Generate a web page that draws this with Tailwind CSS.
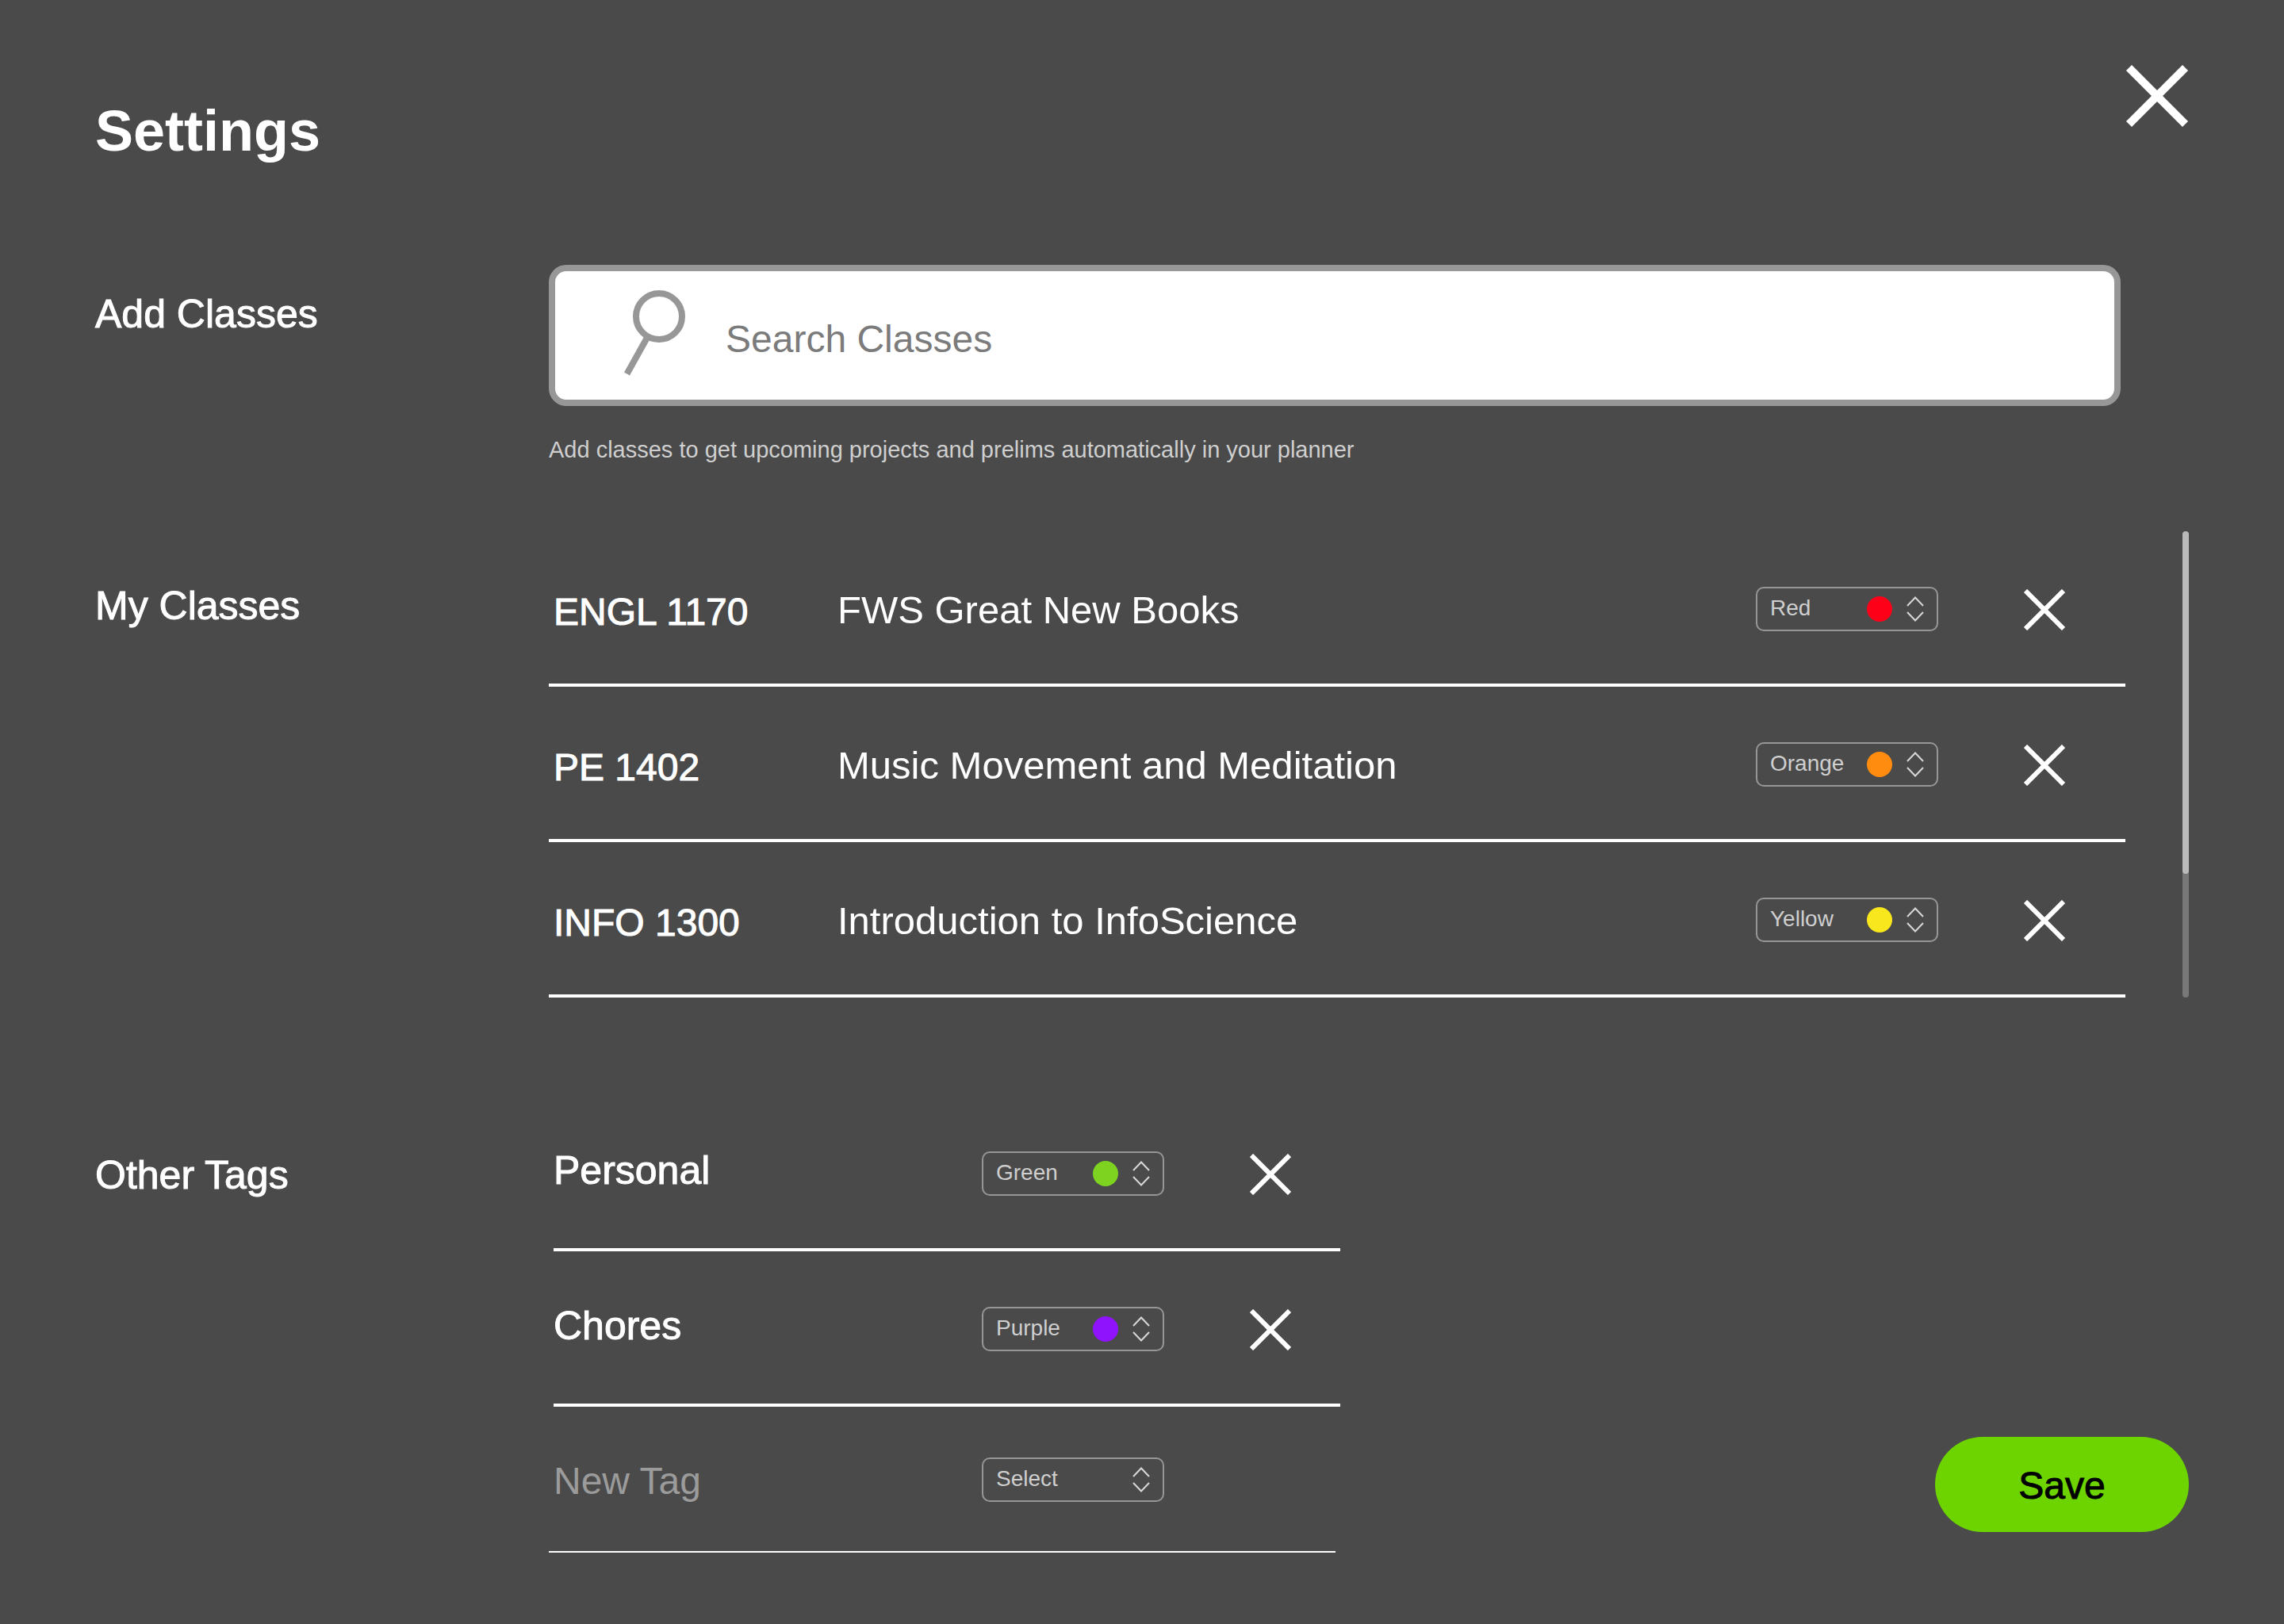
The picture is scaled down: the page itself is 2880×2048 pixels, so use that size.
<!DOCTYPE html>
<html lang="en">
<head>
<meta charset="utf-8">
<meta name="viewport" content="width=device-width, initial-scale=1">
<title>Settings</title>
<script src="https://cdn.jsdelivr.net/npm/@tailwindcss/browser@4"></script>
</head>
<body class="min-h-screen bg-[#4a4a4a] font-['Liberation_Sans',Arial,sans-serif] text-white">
<!-- Shared icon shapes -->
<svg class="hidden" aria-hidden="true">
  <symbol id="remove" viewBox="0 0 52 52"><path d="M2 2L50 50M50 2L2 50" fill="none" stroke="currentColor" stroke-width="6"/></symbol>
  <symbol id="updown" viewBox="0 0 22 32"><path d="M1 12L11 1.500L21 12M1 20L11 30.500L21 20" fill="none" stroke="currentColor" stroke-width="2"/></symbol>
</svg>

<main class="px-[120px] pt-[82px] pb-[90px]">
  <header class="flex items-start justify-between">
    <h1 class="pt-[43px] text-[72px] leading-[80px] font-bold">Settings</h1>
    <button type="button" aria-label="Close settings">
      <svg class="block size-[80px]" viewBox="0 0 80 80"><path d="M4.500 3.500L75.500 74.500M75.500 3.500L4.500 74.500" fill="none" stroke="currentColor" stroke-width="10"/></svg>
    </button>
  </header>

  <section class="mt-[129px] grid grid-cols-[572px_1fr]">
    <h2 class="pt-8 text-[50px] leading-[60px] [-webkit-text-stroke:1px]"><label for="search">Add Classes</label></h2>
    <div class="pr-[86px]">
      <div class="relative">
        <input id="search" type="search" placeholder="Search Classes" class="block h-[178px] w-full appearance-none rounded-[22px] border-8 border-[#979797] bg-white pt-2 pl-[215px] text-[48px] text-[#4a4a4a] placeholder:text-[#7b7b7b] placeholder:opacity-100">
        <svg class="pointer-events-none absolute top-8 left-[94px] h-[110px] w-[80px] text-[#979797]" viewBox="0 0 80 110" aria-hidden="true"><circle cx="45" cy="33" r="29" fill="none" stroke="currentColor" stroke-width="8"/><path d="M31 58L4.500 105.500" stroke="currentColor" stroke-width="8"/></svg>
      </div>
      <p class="mt-[38px] text-[29px] leading-[34px] text-[#cfcfcf]">Add classes to get upcoming projects and prelims automatically in your planner</p>
    </div>
  </section>

  <section class="mt-[86px] grid grid-cols-[572px_1fr]">
    <h2 id="my-classes" class="pt-16 text-[50px] leading-[60px] font-normal [-webkit-text-stroke:1px]">My Classes</h2>
    <div class="flex gap-[72px]">
      <table class="w-full border-separate border-spacing-0 text-left" aria-labelledby="my-classes">
        <tbody>
          <tr>
            <th scope="row" class="h-[196px] w-[364px] border-b-4 border-white pt-3 pl-1.5 text-[48px] leading-[60px] font-normal [-webkit-text-stroke:1px]">ENGL 1170</th>
            <td class="border-b-4 border-white pt-1.5 text-[49px] leading-[60px]">FWS Great New Books</td>
            <td class="w-[338px] border-b-4 border-white pt-1">
              <div class="relative h-14 w-[230px]">
                <select aria-label="Color for ENGL 1170" class="size-full appearance-none rounded-[10px] border-2 border-[#979797] pb-0.5 pl-4 text-[28px] leading-8 text-[#cfcfcf]"><option>Red</option></select>
                <span class="pointer-events-none absolute top-3 right-[58px] size-8 rounded-full bg-[#ff0019]"></span>
                <svg class="pointer-events-none absolute top-3 right-[18px] h-8 w-[22px] text-[#d8d8d8]"><use href="#updown"/></svg>
              </div>
            </td>
            <td class="w-[128px] border-b-4 border-white pt-1.5"><button type="button" class="block" aria-label="Remove ENGL 1170"><svg class="block size-[52px]"><use href="#remove"/></svg></button></td>
          </tr>
          <tr>
            <th scope="row" class="h-[196px] border-b-4 border-white pt-3 pl-1.5 text-[48px] leading-[60px] font-normal [-webkit-text-stroke:1px]">PE 1402</th>
            <td class="border-b-4 border-white pt-1.5 text-[49px] leading-[60px]">Music Movement and Meditation</td>
            <td class="border-b-4 border-white pt-1">
              <div class="relative h-14 w-[230px]">
                <select aria-label="Color for PE 1402" class="size-full appearance-none rounded-[10px] border-2 border-[#979797] pb-0.5 pl-4 text-[28px] leading-8 text-[#cfcfcf]"><option>Orange</option></select>
                <span class="pointer-events-none absolute top-3 right-[58px] size-8 rounded-full bg-[#ff8c0f]"></span>
                <svg class="pointer-events-none absolute top-3 right-[18px] h-8 w-[22px] text-[#d8d8d8]"><use href="#updown"/></svg>
              </div>
            </td>
            <td class="border-b-4 border-white pt-1.5"><button type="button" class="block" aria-label="Remove PE 1402"><svg class="block size-[52px]"><use href="#remove"/></svg></button></td>
          </tr>
          <tr>
            <th scope="row" class="h-[196px] border-b-4 border-white pt-3 pl-1.5 text-[48px] leading-[60px] font-normal [-webkit-text-stroke:1px]">INFO 1300</th>
            <td class="border-b-4 border-white pt-1.5 text-[49px] leading-[60px]">Introduction to InfoScience</td>
            <td class="border-b-4 border-white pt-1">
              <div class="relative h-14 w-[230px]">
                <select aria-label="Color for INFO 1300" class="size-full appearance-none rounded-[10px] border-2 border-[#979797] pb-0.5 pl-4 text-[28px] leading-8 text-[#cfcfcf]"><option>Yellow</option></select>
                <span class="pointer-events-none absolute top-3 right-[58px] size-8 rounded-full bg-[#f8e71c]"></span>
                <svg class="pointer-events-none absolute top-3 right-[18px] h-8 w-[22px] text-[#d8d8d8]"><use href="#updown"/></svg>
              </div>
            </td>
            <td class="border-b-4 border-white pt-1.5"><button type="button" class="block" aria-label="Remove INFO 1300"><svg class="block size-[52px]"><use href="#remove"/></svg></button></td>
          </tr>
        </tbody>
      </table>
      <!-- Scroll track and thumb -->
      <div class="w-2 shrink-0 rounded-full bg-[#787878]"><div class="h-[432px] rounded-full bg-[#bababa]"></div></div>
    </div>
  </section>

  <section class="mt-[124px] grid grid-cols-[572px_1fr]">
    <h2 class="pt-[70px] text-[50px] leading-[60px] [-webkit-text-stroke:1px]">Other Tags</h2>
    <div class="flex items-end justify-between">
      <ul class="w-[998px]">
        <li class="ml-1.5 flex h-[196px] items-center border-b-4 border-white">
          <span class="w-[540px] pb-1 text-[50px] leading-[60px] [-webkit-text-stroke:1px]">Personal</span>
          <div class="relative mt-1 mr-[108px] h-14 w-[230px]">
            <select aria-label="Color for Personal" class="size-full appearance-none rounded-[10px] border-2 border-[#979797] pb-0.5 pl-4 text-[28px] leading-8 text-[#cfcfcf]"><option>Green</option></select>
            <span class="pointer-events-none absolute top-3 right-[58px] size-8 rounded-full bg-[#7ed321]"></span>
            <svg class="pointer-events-none absolute top-3 right-[18px] h-8 w-[22px] text-[#d8d8d8]"><use href="#updown"/></svg>
          </div>
          <button type="button" class="mt-1.5" aria-label="Remove Personal"><svg class="block size-[52px]"><use href="#remove"/></svg></button>
        </li>
        <li class="ml-1.5 flex h-[196px] items-center border-b-4 border-white">
          <span class="w-[540px] pb-1 text-[50px] leading-[60px] [-webkit-text-stroke:1px]">Chores</span>
          <div class="relative mt-1 mr-[108px] h-14 w-[230px]">
            <select aria-label="Color for Chores" class="size-full appearance-none rounded-[10px] border-2 border-[#979797] pb-0.5 pl-4 text-[28px] leading-8 text-[#cfcfcf]"><option>Purple</option></select>
            <span class="pointer-events-none absolute top-3 right-[58px] size-8 rounded-full bg-[#9013fe]"></span>
            <svg class="pointer-events-none absolute top-3 right-[18px] h-8 w-[22px] text-[#d8d8d8]"><use href="#updown"/></svg>
          </div>
          <button type="button" class="mt-1.5" aria-label="Remove Chores"><svg class="block size-[52px]"><use href="#remove"/></svg></button>
        </li>
        <li class="mr-1.5 flex h-[184px] items-center border-b-2 border-white pt-0.5 pl-1.5">
          <input type="text" aria-label="New tag name" placeholder="New Tag" class="h-[60px] w-[540px] pt-1 text-[48px] placeholder:text-[#9b9b9b] placeholder:opacity-100">
          <div class="relative h-14 w-[230px]">
            <select aria-label="Color for new tag" class="size-full appearance-none rounded-[10px] border-2 border-[#979797] pb-0.5 pl-4 text-[28px] leading-8 text-[#cfcfcf]"><option>Select</option></select>
            <svg class="pointer-events-none absolute top-3 right-[18px] h-8 w-[22px] text-[#d8d8d8]"><use href="#updown"/></svg>
          </div>
        </li>
      </ul>
      <button type="button" class="mb-[26px] h-[120px] w-[320px] rounded-full bg-[#6dd400] pt-1 text-[48px] leading-[60px] text-black [-webkit-text-stroke:1px]">Save</button>
    </div>
  </section>
</main>
</body>
</html>
